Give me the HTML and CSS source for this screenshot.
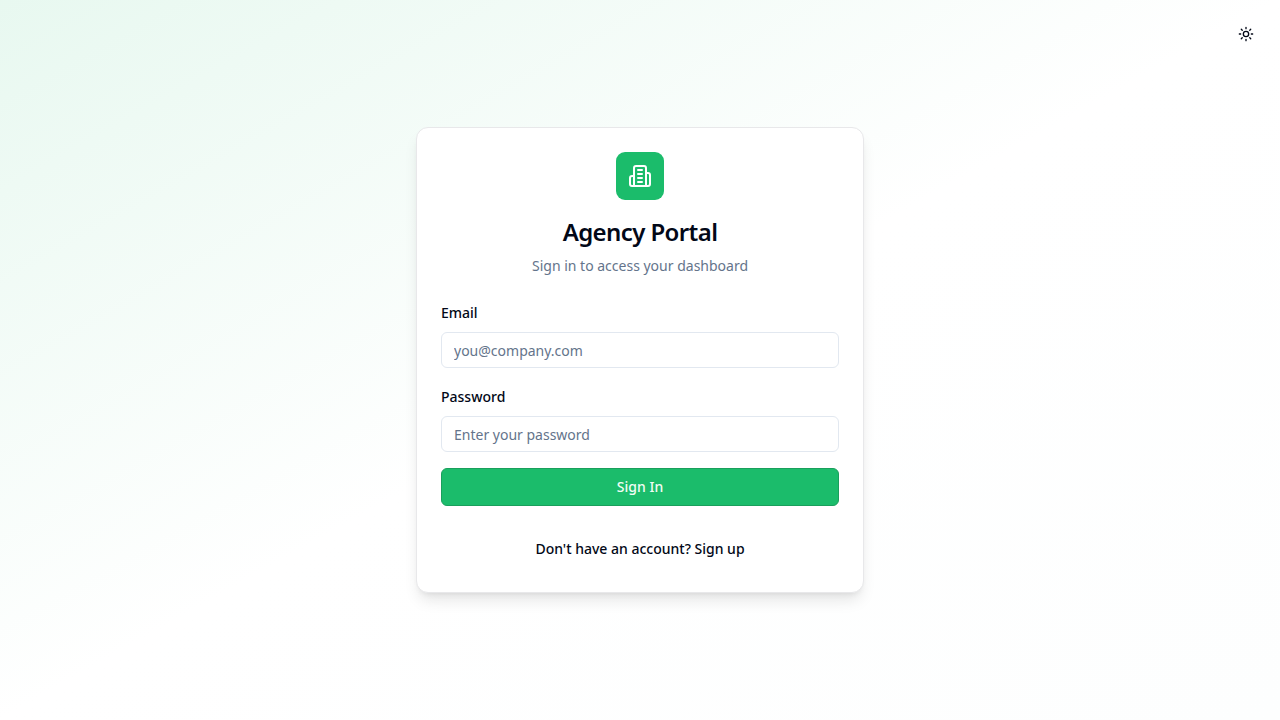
FILE: index.html
```html
<!DOCTYPE html>
<html lang="en">
<head>
<meta charset="utf-8">
<meta name="viewport" content="width=device-width, initial-scale=1">
<title>Agency Portal</title>
<link rel="stylesheet" href="styles.css">
</head>
<body>
<main class="page">
  <button class="theme-toggle" type="button" aria-label="Toggle theme">
    <svg class="icon-sm" viewBox="0 0 24 24" aria-hidden="true"><circle cx="12" cy="12" r="4"/><path d="M12 2v2M12 20v2M4.93 4.93l1.41 1.41M17.66 17.66l1.41 1.41M2 12h2M20 12h2M6.34 17.66l-1.41 1.41M19.07 4.93l-1.41 1.41"/></svg>
  </button>
  <section class="card">
    <header class="card-header">
      <div class="logo">
        <svg class="icon-lg" viewBox="0 0 24 24" aria-hidden="true"><path d="M6 22V4a2 2 0 0 1 2-2h8a2 2 0 0 1 2 2v18Z"/><path d="M6 12H4a2 2 0 0 0-2 2v6a2 2 0 0 0 2 2h2"/><path d="M18 9h2a2 2 0 0 1 2 2v9a2 2 0 0 1-2 2h-2"/><path d="M10 6h4"/><path d="M10 10h4"/><path d="M10 14h4"/><path d="M10 18h4"/></svg>
      </div>
      <div class="heading">
        <h1 class="title">Agency Portal</h1>
        <p class="subtitle">Sign in to access your dashboard</p>
      </div>
    </header>
    <div class="card-content">
      <form class="form">
        <div class="field">
          <label class="label" for="email">Email</label>
          <input class="input" id="email" type="email" placeholder="you@company.com">
        </div>
        <div class="field">
          <label class="label" for="password">Password</label>
          <input class="input" id="password" type="password" placeholder="Enter your password">
        </div>
        <button class="submit" type="submit">Sign In</button>
      </form>
      <button class="switch" type="button">Don't have an account? Sign up</button>
    </div>
  </section>
</main>
</body>
</html>
```
FILE: styles.css
```css
*, *::before, *::after { box-sizing: border-box; }
body {
  margin: 0;
  background: #fff;
  color: #020817;
  font-family: "Noto Sans", sans-serif;
  font-size: 16px;
  line-height: 24px;
}
button, input {
  font: inherit;
  font-size: 14px;
  line-height: 20px;
  color: inherit;
}
button { cursor: pointer; }
h1, p { margin: 0; }
svg {
  fill: none;
  stroke: currentColor;
  stroke-width: 2;
  stroke-linecap: round;
  stroke-linejoin: round;
}
.icon-sm { width: 16px; height: 16px; }
.icon-lg { width: 24px; height: 24px; }
.page {
  position: relative;
  min-height: 100vh;
  display: flex;
  align-items: center;
  justify-content: center;
  padding: 16px;
  background: linear-gradient(to bottom right, rgba(27, 188, 107, 0.1), #fff 50%, #fdfefe);
}
.theme-toggle {
  position: absolute;
  top: 16px;
  right: 16px;
  width: 36px;
  height: 36px;
  padding: 0;
  display: grid;
  place-items: center;
  border: 0;
  border-radius: 6px;
  background: transparent;
}
.card {
  width: 100%;
  max-width: 448px;
  border: 1px solid #e8e8ea;
  border-radius: 12px;
  background: #fff;
  box-shadow: 0 10px 15px -3px rgba(0, 0, 0, 0.1), 0 4px 6px -4px rgba(0, 0, 0, 0.1);
}
.card-header {
  display: flex;
  flex-direction: column;
  align-items: center;
  gap: 16px;
  padding: 24px;
  text-align: center;
}
.logo {
  width: 48px;
  height: 48px;
  display: grid;
  place-items: center;
  border-radius: 9px;
  background: #1bbc6b;
  color: #fff;
}
.heading { display: grid; gap: 8px; }
.title { font-size: 24px; line-height: 32px; font-weight: 600; letter-spacing: -0.025em; }
.subtitle { font-size: 14px; line-height: 20px; color: #64748b; }
.card-content { padding: 0 24px 24px; }
.form { display: grid; gap: 16px; }
.label { font-size: 14px; line-height: 20px; font-weight: 500; }
.input {
  display: block;
  width: 100%;
  height: 36px;
  margin-top: 8px;
  padding: 8px 12px;
  border: 1px solid #e2e8f0;
  border-radius: 6px;
  background: #fff;
}
.input::placeholder { color: #64748b; opacity: 1; }
.submit {
  min-height: 38px;
  padding: 8px 16px;
  border: 1px solid #1a9f5c;
  border-radius: 6px;
  background: #1bbc6b;
  color: #f0fdf4;
  font-weight: 500;
}
.switch {
  display: block;
  margin: 24px auto 0;
  padding: 8px 16px;
  border: 1px solid transparent;
  border-radius: 6px;
  background: transparent;
  font-weight: 500;
}
```
